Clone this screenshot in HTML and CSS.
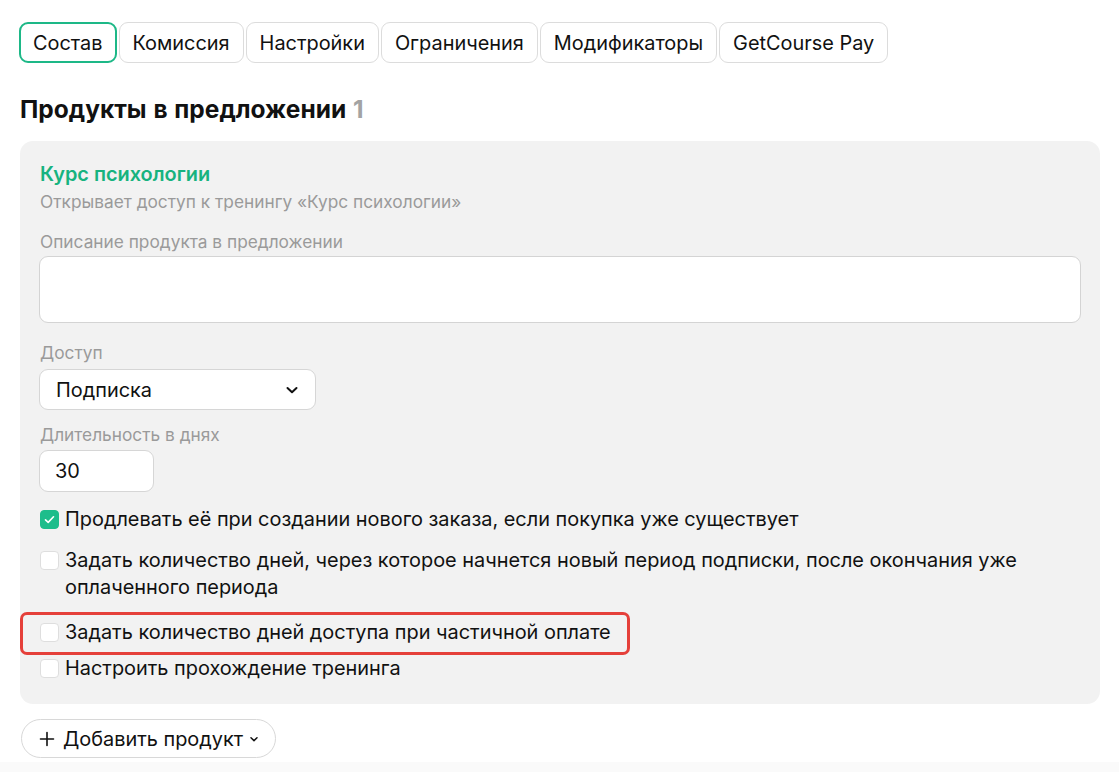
FILE: index.html
```html
<!DOCTYPE html>
<html lang="ru">
<head>
<meta charset="utf-8">
<title>Продукты в предложении</title>
<link rel="stylesheet" href="styles.css">
</head>
<body>
<div class="page">
  <nav class="tabs">
    <button class="tab tab-active">Состав</button>
    <button class="tab">Комиссия</button>
    <button class="tab">Настройки</button>
    <button class="tab">Ограничения</button>
    <button class="tab">Модификаторы</button>
    <button class="tab">GetCourse Pay</button>
  </nav>

  <h2 class="heading">Продукты в предложении <span class="count">1</span></h2>

  <section class="card">
    <div class="product-title">Курс психологии</div>
    <div class="product-sub">Открывает доступ к тренингу «Курс психологии»</div>

    <label class="field-label label-first">Описание продукта в предложении</label>
    <div class="textarea"></div>

    <label class="field-label label-access">Доступ</label>
    <div class="select">
      <span>Подписка</span>
      <svg class="chev" width="14" height="14" viewBox="0 0 14 14"><path d="M2.5 5 L7 9.3 L11.5 5" fill="none" stroke="#111" stroke-width="2" stroke-linecap="round" stroke-linejoin="round"/></svg>
    </div>

    <label class="field-label">Длительность в днях</label>
    <div class="input">30</div>

    <div class="checks">
      <div class="check row1">
        <span class="box box-on"><svg width="13" height="13" viewBox="0 0 13 13"><path d="M2.5 6.8 L5.2 9.4 L10.5 3.8" fill="none" stroke="#fff" stroke-width="1.6" stroke-linecap="round" stroke-linejoin="round"/></svg></span>
        <span class="check-text">Продлевать её при создании нового заказа, если покупка уже существует</span>
      </div>
      <div class="check row2">
        <span class="box"></span>
        <span class="check-text">Задать количество дней, через которое начнется новый период подписки, после окончания уже оплаченного периода</span>
      </div>
      <div class="check row3 highlighted">
        <span class="box"></span>
        <span class="check-text">Задать количество дней доступа при частичной оплате</span>
      </div>
      <div class="check row4">
        <span class="box"></span>
        <span class="check-text">Настроить прохождение тренинга</span>
      </div>
    </div>
  </section>

  <button class="add-btn">
    <svg width="16" height="16" viewBox="0 0 16 16"><path d="M8 1.5 V14.5 M1.5 8 H14.5" stroke="#111" stroke-width="1.6" stroke-linecap="round"/></svg>
    <span>Добавить продукт</span>
    <svg width="10" height="10" viewBox="0 0 10 10"><path d="M2 3.8 L5 6.6 L8 3.8" fill="none" stroke="#111" stroke-width="1.5" stroke-linecap="round" stroke-linejoin="round"/></svg>
  </button>
</div>
<div class="footer-strip"></div>
</body>
</html>
```

FILE: styles.css
```css
* { box-sizing: border-box; }

html, body {
  margin: 0;
  padding: 0;
  background: #ffffff;
  font-family: Inter, "Noto Sans", "Liberation Sans", sans-serif;
  color: #111111;
}

.page {
  padding: 22px 19px 0 20px;
  width: 1119px;
  height: 762px;
}

.tabs {
  display: flex;
  gap: 2px;
  margin-left: -1px;
}

.tab {
  height: 41px;
  padding: 0 13px;
  border: 1px solid #dcdcdc;
  border-radius: 9px;
  background: #fff;
  font-family: inherit;
  font-size: 19.9px;
  color: #111;
  cursor: pointer;
}

.tab-active {
  border: 2px solid #1db887;
  padding: 0 12px;
}

.heading {
  margin: 32px 0 18px 0;
  font-size: 24.5px;
  line-height: 28px;
  font-weight: 700;
  word-spacing: 1px;
}

.count {
  color: #a3a3a3;
}

.card {
  background: #f2f2f2;
  border-radius: 13px;
  padding: 21px 19px 22px 20px;
  width: 1080px;
}

.product-title {
  color: #17b37f;
  font-size: 19.9px;
  line-height: 24px;
  font-weight: 600;
}

.product-sub {
  margin-top: 6px;
  color: #9a9a9a;
  font-size: 17.3px;
  line-height: 20px;
}

.field-label {
  display: block;
  margin-top: 15px;
  margin-bottom: 5px;
  color: #9a9a9a;
  font-size: 17.3px;
  line-height: 20px;
}

.label-first {
  margin-top: 20px;
  margin-bottom: 4px;
}

.label-access {
  margin-top: 20px;
  margin-bottom: 6px;
}

.textarea {
  height: 67px;
  margin-left: -1px;
  background: #fff;
  border: 1px solid #d4d4d4;
  border-radius: 9px;
}

.select {
  width: 277px;
  height: 41px;
  margin-left: -1px;
  background: #fff;
  border: 1px solid #d6d6d6;
  border-radius: 9px;
  display: flex;
  align-items: center;
  justify-content: space-between;
  padding: 0 16px 0 16px;
  font-size: 19.9px;
}

.input {
  width: 115px;
  height: 42px;
  margin-left: -1px;
  background: #fff;
  border: 1px solid #d6d6d6;
  border-radius: 9px;
  display: flex;
  align-items: center;
  padding: 0 15px;
  font-size: 19.9px;
}

.checks {
  margin-top: 14px;
  margin-right: -14px;
  display: flex;
  flex-direction: column;
  align-items: flex-start;
}

.check {
  display: flex;
  align-items: flex-start;
  gap: 6px;
  font-size: 19.9px;
  line-height: 27px;
}

.row2 { margin-top: 14px; }
.row3 { margin-top: 18px; }
.row4 { margin-top: 9px; }

.box {
  flex: none;
  width: 19px;
  height: 19px;
  margin-top: 4px;
  background: #fff;
  border: 1px solid #dedede;
  border-radius: 4px;
  display: flex;
  align-items: center;
  justify-content: center;
}

.box-on {
  background: #1dbd8b;
  border-color: #1dbd8b;
}

.highlighted {
  position: relative;
}

.highlighted::after {
  content: "";
  position: absolute;
  top: -7px;
  bottom: -9px;
  left: -20px;
  right: -19px;
  border: 3px solid #e5403a;
  border-radius: 7px;
  pointer-events: none;
}

.add-btn {
  margin-top: 15px;
  margin-left: 1px;
  height: 39px;
  padding: 0 16px 0 17px;
  border: 1px solid #d8d8d8;
  border-radius: 20px;
  background: #fff;
  display: inline-flex;
  align-items: center;
  gap: 8px;
  font-family: inherit;
  font-size: 19.9px;
  color: #111;
}

.add-btn span {
  margin-right: -2px;
}

.footer-strip {
  height: 10px;
  background: #fafafa;
}
```
